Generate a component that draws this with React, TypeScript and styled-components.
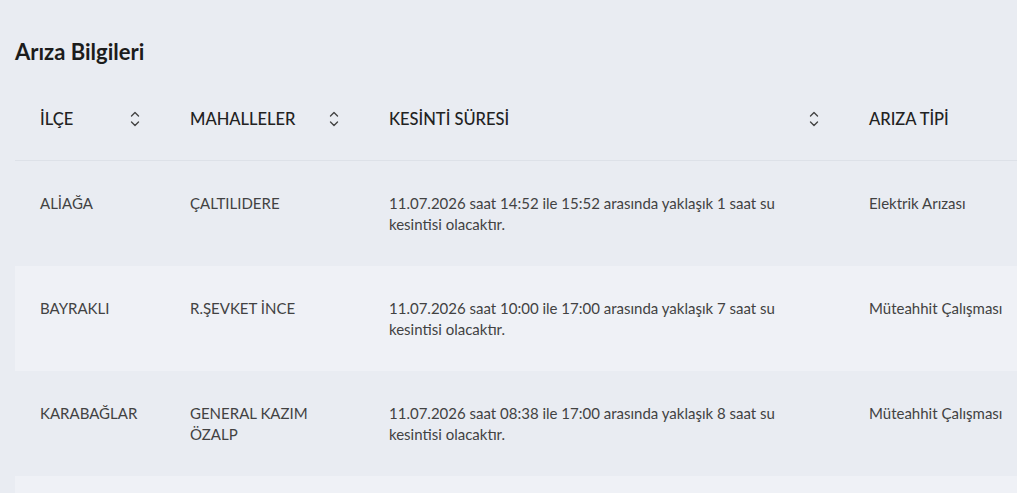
import React from "react";
import styled, { createGlobalStyle } from "styled-components";

const Global = createGlobalStyle`
  *, *::before, *::after { box-sizing: border-box; }
  html, body { margin: 0; padding: 0; background: #e9ecf2; overflow: hidden; }
  body { font-family: "Lato", "Noto Sans", sans-serif; color: #2b2b2b; }
`;

const Page = styled.div`
  padding: 38px 0 0 15px;
  width: 1120px;
`;

const Title = styled.h2`
  margin: 0 0 12px 0;
  font-size: 22px;
  font-weight: 700;
  line-height: 28px;
  color: #1c1c1c;
`;

const Table = styled.table`
  border-collapse: collapse;
  width: 1105px;
  table-layout: fixed;
`;

const Th = styled.th<{ $w: number }>`
  width: ${(p) => p.$w}px;
  text-align: left;
  padding: 30px 25px;
  font-size: 16.5px;
  font-weight: 500;
  line-height: 22px;
  color: #222;
  border-bottom: 1px solid #dde1e8;
`;

const HeadInner = styled.div`
  display: flex;
  align-items: center;
  justify-content: space-between;
`;

const Row = styled.tr<{ $alt: boolean }>`
  background: ${(p) => (p.$alt ? "#eff1f6" : "transparent")};
  height: 105px;
`;

const Td = styled.td`
  vertical-align: top;
  padding: 32px 25px 31px;
  font-size: 15px;
  line-height: 21px;
  color: #424242;
`;

const SortIcon = () => (
  <svg width="10" height="16" viewBox="0 0 10 16" fill="none" stroke="#444" strokeWidth="1.4" strokeLinecap="round" strokeLinejoin="round">
    <path d="M1.5 5 L5 1.5 L8.5 5" />
    <path d="M1.5 11 L5 14.5 L8.5 11" />
  </svg>
);

const rows = [
  ["ALİAĞA", "ÇALTILIDERE", "11.07.2026 saat 14:52 ile 15:52 arasında yaklaşık 1 saat su kesintisi olacaktır.", "Elektrik Arızası"],
  ["BAYRAKLI", "R.ŞEVKET İNCE", "11.07.2026 saat 10:00 ile 17:00 arasında yaklaşık 7 saat su kesintisi olacaktır.", "Müteahhit Çalışması"],
  ["KARABAĞLAR", "GENERAL KAZIM ÖZALP", "11.07.2026 saat 08:38 ile 17:00 arasında yaklaşık 8 saat su kesintisi olacaktır.", "Müteahhit Çalışması"],
  ["", "", "", ""],
];

export default function App() {
  return (
    <>
      <Global />
      <Page>
        <Title>Arıza Bilgileri</Title>
        <Table>
          <thead>
            <tr>
              <Th $w={150}><HeadInner>İLÇE<SortIcon /></HeadInner></Th>
              <Th $w={199}><HeadInner>MAHALLELER<SortIcon /></HeadInner></Th>
              <Th $w={480}><HeadInner>KESİNTİ SÜRESİ<SortIcon /></HeadInner></Th>
              <Th $w={276}><HeadInner>ARIZA TİPİ<SortIcon /></HeadInner></Th>
            </tr>
          </thead>
          <tbody>
            {rows.map((r, i) => (
              <Row key={i} $alt={i % 2 === 1}>
                {r.map((c, j) => (
                  <Td key={j}>{c}</Td>
                ))}
              </Row>
            ))}
          </tbody>
        </Table>
      </Page>
    </>
  );
}
